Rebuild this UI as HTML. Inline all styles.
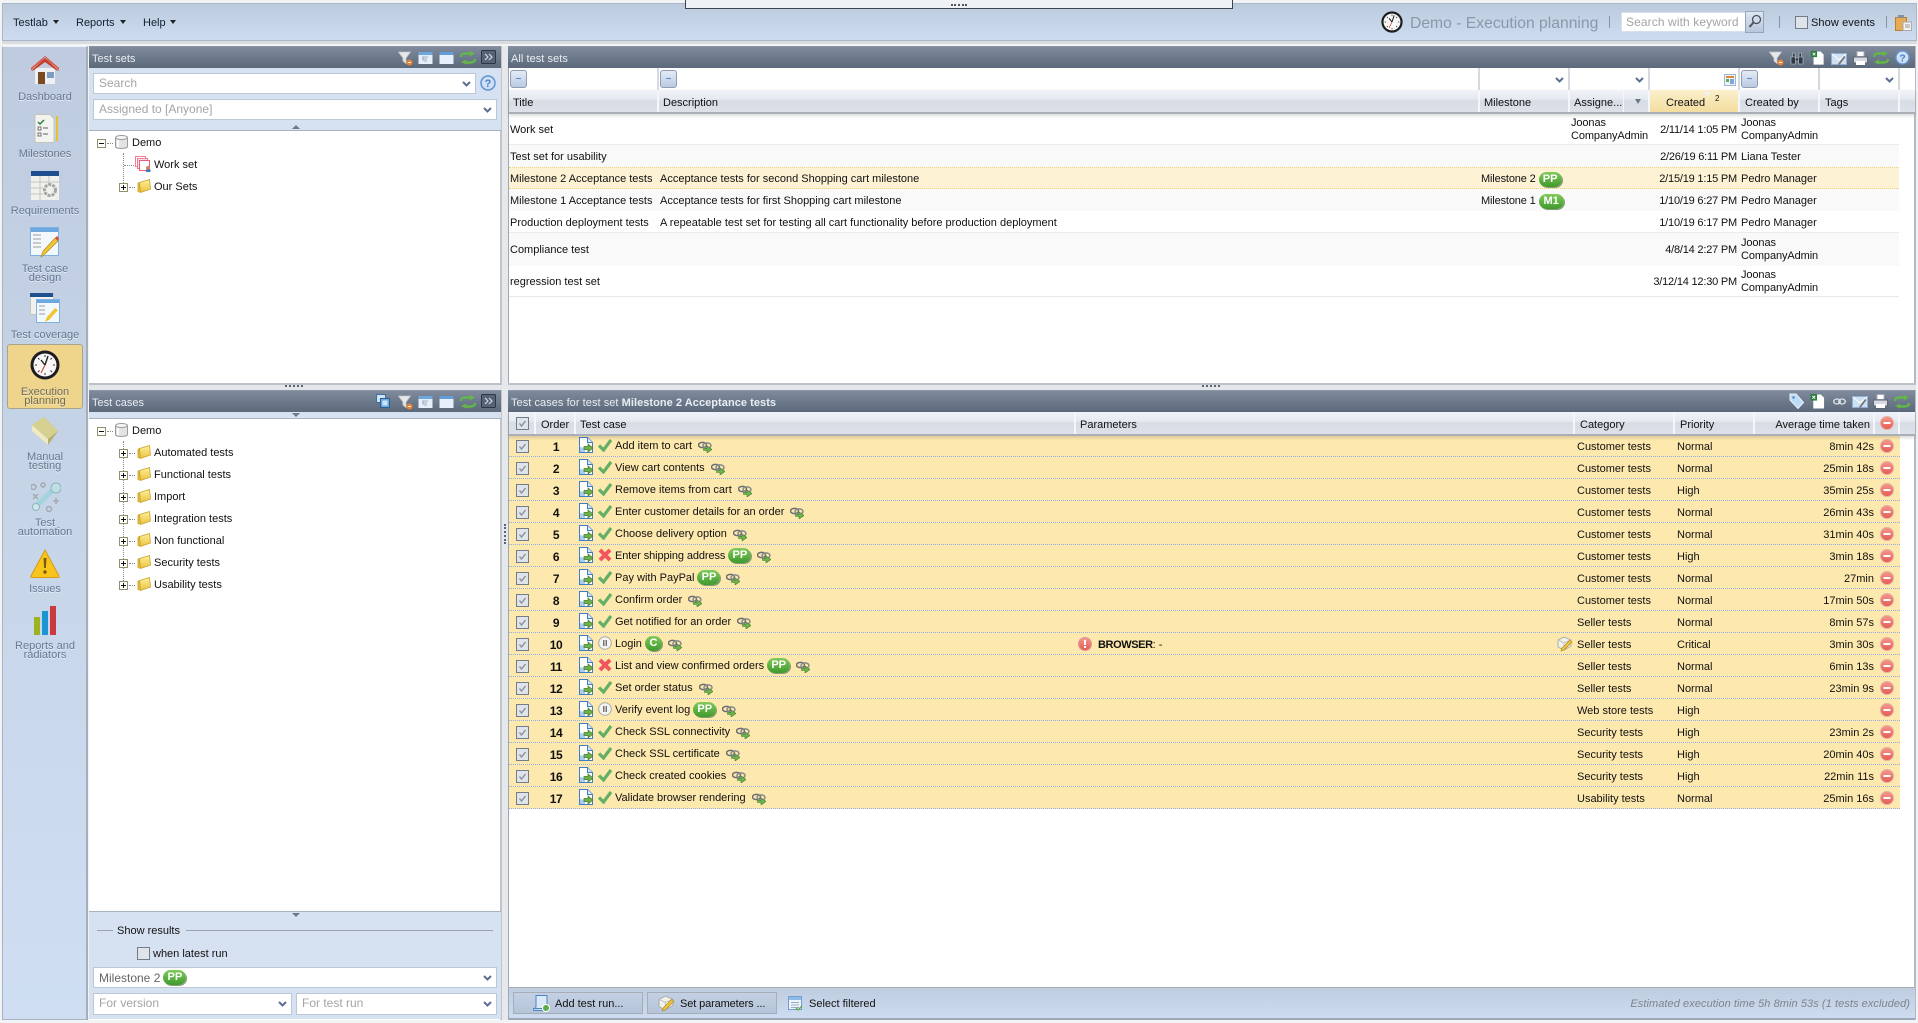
<!DOCTYPE html>
<html><head><meta charset="utf-8"><title>Demo - Execution planning</title>
<style>
*{box-sizing:border-box}
html,body{margin:0;padding:0;width:1918px;height:1023px;overflow:hidden;background:#f2f3f5;font:11px/12px "Liberation Sans",Arial,sans-serif;color:#111}
.a,.t,svg.i{position:absolute}
.t{white-space:nowrap;line-height:12px;margin-top:1px}
.hd{position:absolute;height:22px;background:linear-gradient(#7f8b9d,#5b697b);color:#eef1f5;border-top:1px solid #8a95a5}
.hd .t{color:#e9edf2}
.nav{position:absolute;left:0;width:90px;text-align:center;line-height:9px;color:#67778f;text-shadow:0 1px 0 #e4ecf7}
.in{position:absolute;background:#fff;border:1px solid #bcc7d8;color:#a4a4a4;line-height:18px;padding-left:5px;font-size:12px;white-space:nowrap}
.ch{position:absolute;width:9px;height:6px}
.colh{position:absolute;top:0;height:100%;border-right:2px solid #f4f6f9}
.gh{position:absolute;z-index:2;background:linear-gradient(#f0f3f8 0,#e6eaf1 40%,#d7dce5 50%,#dde1e8 100%);border-bottom:2px solid #a9aeb7;box-shadow:0 2px 3px rgba(60,60,60,.18)}
.fb{position:absolute;width:17px;height:18px;border:1px solid #8f9db3;border-radius:3px;background:linear-gradient(#e4ebf5,#b9cae2);color:#2a62c0;text-align:center;line-height:18px;font-size:10px}
.r{position:absolute;left:0;width:1391px;height:22px;background:#fde8ad;border-bottom:1px dotted #8fabe6}
.r .t{top:5px}
.cb{position:absolute;left:7px;top:5px;width:13px;height:13px}
.o{position:absolute;left:27px;width:40px;top:6px;text-align:center;font-weight:bold;font-size:12px;line-height:12px;letter-spacing:-.4px}
.tc{position:absolute;left:70px;top:1px;height:21px;display:flex;align-items:center;white-space:nowrap;padding-bottom:1px}
.tc svg{flex:none;position:relative;top:-1px}
.pill{display:inline-block;height:15px;width:23px;border-radius:8px;background:linear-gradient(#82c95c,#3f9a2c);color:#fff;font-weight:bold;font-size:11px;line-height:14px;text-align:center;margin-left:3px;box-shadow:1px 1px 0 #8b9a7a;position:relative;top:-1px}
.c1{left:1068px}.c2{left:1168px}.c3{right:26px}
.st{width:14px;height:14px;margin:0 3px 0 0}
.lk{width:14px;height:12px;margin-left:6px;margin-top:4px}
.m{position:absolute;left:1371px;top:4px;width:14px;height:14px}
.gr{position:absolute;left:0;width:1391px;height:1px;background:#ebecef}
.bt{position:absolute;top:992px;height:22px;width:130px;border:1px solid #a7adb6;background:linear-gradient(#c4d1e4,#b5c4d9)}
.d{letter-spacing:-.2px}
.j{line-height:13px!important;letter-spacing:-.1px}
</style></head><body>
<svg width="0" height="0" style="position:absolute">
<defs>
<linearGradient id="gf" x1="0" y1="0" x2="0" y2="1"><stop offset="0" stop-color="#fdf09a"/><stop offset="1" stop-color="#ecc23f"/></linearGradient>
<linearGradient id="gr" x1="0" y1="0" x2="0" y2="1"><stop offset="0" stop-color="#f59a8e"/><stop offset="1" stop-color="#e65a52"/></linearGradient>
<symbol id="doc" viewBox="0 0 14 16"><path d="M.5.5h8l5 5v10H.5z" fill="#fff" stroke="#3f7ec4"/><path d="M8.500.5v5h5" fill="#d8e8f8" stroke="#3f7ec4"/><path d="M1 10l5 1v4H1z" fill="#a9cdf0"/><path d="M5 9.500h4V7l5 4-5 4v-2.500H5z" fill="#6fb04a" stroke="#3e7d2c" stroke-width=".7"/></symbol>
<symbol id="ok" viewBox="0 0 14 14"><path d="M1 7.500l4.500 4.500L13 2" fill="none" stroke="#62b066" stroke-width="3.200"/></symbol>
<symbol id="x" viewBox="0 0 14 14"><path d="M2 2l10 10M12 2L2 12" fill="none" stroke="#f2555e" stroke-width="4"/></symbol>
<symbol id="pz" viewBox="0 0 14 14"><circle cx="7" cy="7" r="6.300" fill="#f4f4f2" stroke="#a9a9a9"/><path d="M5 4h1.500v6H5zM7.500 4H9v6H7.500z" fill="#777"/></symbol>
<symbol id="lk" viewBox="0 0 14 12"><ellipse cx="4.500" cy="4" rx="4" ry="2.600" fill="none" stroke="#6c6f72" stroke-width="1.500"/><ellipse cx="9" cy="4.500" rx="4" ry="2.600" fill="none" stroke="#85888b" stroke-width="1.500"/><path d="M5.500 7.500H9V5l5 3.500L9 12V9.500H5.500z" fill="#71b34c" stroke="#417f2e" stroke-width=".6"/></symbol>
<symbol id="m" viewBox="0 0 14 14"><circle cx="7" cy="7" r="6.500" fill="url(#gr)" stroke="#e6b0a4"/><rect x="3.500" y="6" width="7" height="2" fill="#fff"/></symbol>
<symbol id="cb" viewBox="0 0 13 13"><rect x=".5" y=".5" width="12" height="12" fill="#dfe3ea" stroke="#747c8c"/><path d="M3.500 6.500l2 2.500 4-5" fill="none" stroke="#8a8f98" stroke-width="1.400"/></symbol>
<symbol id="fo" viewBox="0 0 14 14"><path d="M.5 4l2-1 .500 10.500L.5 13z" fill="#d9b23a"/><path d="M2.500 3.500L12.500.5l1 9.500-10 3.500z" fill="url(#gf)" stroke="#c9a22e" stroke-width=".8"/></symbol>
<symbol id="db" viewBox="0 0 13 14"><path d="M.5 2.500v9c0 2.600 12 2.600 12 0v-9" fill="#e3e3e3" stroke="#9a9a9a"/><ellipse cx="6.500" cy="2.500" rx="6" ry="2" fill="#f6f6f6" stroke="#9a9a9a"/><path d="M3 5v7" stroke="#fff" stroke-width="2"/></symbol>
<symbol id="pl" viewBox="0 0 9 9"><rect x=".5" y=".5" width="8" height="8" fill="#fff" stroke="#8f8f6c"/><path d="M2 4.500h5M4.500 2v5" stroke="#111"/></symbol>
<symbol id="mi" viewBox="0 0 9 9"><rect x=".5" y=".5" width="8" height="8" fill="#fff" stroke="#8f8f6c"/><path d="M2 4.500h5" stroke="#111"/></symbol>
<symbol id="fl" viewBox="0 0 15 15"><path d="M.5 1h12L8 7v5.500L5 10V7z" fill="#e7e8ea" stroke="#c4c7cb" stroke-width=".8"/><circle cx="11.500" cy="11.500" r="3" fill="#f0822d"/><rect x="10" y="11" width="3" height="1" fill="#fff"/></symbol>
<symbol id="tr" viewBox="0 0 15 14"><rect x=".5" y="1" width="14" height="12" fill="#e4effa"/><rect x=".5" y="1" width="14" height="3" fill="#6ea7dd"/><path d="M4 6h6M5 8h4M6 10h3M5 6v4" stroke="#8a9aae" stroke-width=".8"/></symbol>
<symbol id="wn" viewBox="0 0 15 14"><rect x=".5" y="1" width="14" height="12" fill="#e6effa"/><rect x=".5" y="1" width="14" height="3" fill="#5f9cd8"/></symbol>
<symbol id="rf" viewBox="0 0 16 14"><path d="M1 6c0-3 2-3.500 5-3.500h5M15 8c0 3-2 3.500-5 3.500H5" fill="none" stroke="#64b648" stroke-width="2.400"/><path d="M10 0l5 2.500-5 3zM6 8.500v5l-5-2.500z" fill="#64b648"/></symbol>
<symbol id="ff" viewBox="0 0 15 14"><rect x=".5" y=".5" width="14" height="13" rx="1" fill="#56647a" stroke="#2c3644"/><path d="M4 4l3 3-3 3M8 4l3 3-3 3" fill="none" stroke="#dfe6ef"/></symbol>
<symbol id="cp" viewBox="0 0 15 15"><rect x=".5" y=".5" width="9" height="8" fill="#cfe3f6" stroke="#3f6f9f"/><rect x="4.500" y="4.500" width="9" height="9" fill="#69a9df" stroke="#2f5f8f"/><rect x="6.500" y="6.500" width="5" height="5" fill="#cde4f7"/></symbol>
<symbol id="bi" viewBox="0 0 14 13"><path d="M1 5h4.500v7H1zM8.500 5H13v7H8.500zM2.500 1h2.500v4H2.500zM9 1h2.500v4H9zM5.500 6h3v3h-3z" fill="#2f3a44" stroke="#c9ced6" stroke-width=".6"/></symbol>
<symbol id="xl" viewBox="0 0 15 16"><path d="M3 .5h8l3.500 3.500v11.500H3z" fill="#fff"/><rect y="0" width="7" height="7" fill="#2e7d3e"/><path d="M2 2l3 3M5 2L2 5" stroke="#fff"/></symbol>
<symbol id="ma" viewBox="0 0 16 14"><rect x=".5" y="1.500" width="15" height="11" fill="#cfe0f3" stroke="#8fb0d4"/><path d="M1 2l7 6 7-6" fill="none" stroke="#fff"/><path d="M7 12l6-8 1.500 1-6 8z" fill="#777"/></symbol>
<symbol id="pr" viewBox="0 0 15 15"><path d="M4 .5h7v5H4z" fill="#fff" stroke="#aab"/><path d="M.5 6h14v6h-2.500v2.500H3V12H.5z" fill="#d7dbe1" stroke="#5d6672"/><rect x="3" y="10" width="9" height="4" fill="#fff"/></symbol>
<symbol id="tg" viewBox="0 0 15 16"><path d="M1 1h6l7.500 8.500-5.500 6L1 7z" fill="#bcdcf7" stroke="#e9f3fb"/><circle cx="4.500" cy="4.500" r="1.200" fill="#4a7fb5"/></symbol>
<symbol id="hl" viewBox="0 0 16 16"><circle cx="8" cy="8" r="7" fill="#cfe0f5" stroke="#5f95d5" stroke-width="1.500"/><text x="8" y="12" font-family="Liberation Sans" font-weight="bold" font-size="11" fill="#4a7fc5" text-anchor="middle">?</text></symbol>
<symbol id="pe" viewBox="0 0 16 16"><path d="M1 4l6-3 7 3v6l-7 4-6-3z" fill="#f1f1ee" stroke="#b0b0a8"/><path d="M1 4l6 3 7-3M7 7v7" fill="none" stroke="#c5c5bf"/><path d="M4 15l1-3 8-8 2 2-8 8z" fill="#f0c43c" stroke="#a9851e" stroke-width=".6"/></symbol>
<symbol id="ck" viewBox="0 0 30 30"><circle cx="15" cy="15" r="14.500" fill="#1d1d1f"/><circle cx="15" cy="15" r="11.500" fill="#f7f7f7"/><path d="M15 5v2M15 23v2M5 15h2M23 15h2M8 8l1.500 1.500M22 8l-1.500 1.500M8 22l1.500-1.500M22 22l-1.500-1.500" stroke="#333"/><path d="M15 15L11 10M15 15l3-9" stroke="#222" stroke-width="1.400" fill="none"/><path d="M15 15l-4 8" stroke="#c33" stroke-width="1"/></symbol>
<symbol id="ch" viewBox="0 0 9 6"><path d="M1 1l3.500 3.500L8 1" fill="none" stroke="#5d6d90" stroke-width="2"/></symbol>
</defs></svg>

<!-- top bar -->
<div class="a" style="left:2px;top:3px;width:1915px;height:38px;background:linear-gradient(#bccadd,#cddcf0);border:1px solid #abb6c6"></div>
<div class="a" style="left:2px;top:41px;width:1915px;height:3px;background:#d8dbe0"></div>
<!-- top drawer -->
<div class="a" style="left:685px;top:0;width:548px;height:9px;background:#eef1f5;border:1px solid #3d4450;border-top:0"></div>
<div class="a" style="left:951px;top:4px;width:16px;height:2px;border-top:2px dotted #555"></div>
<div class="t" style="left:13px;top:16px;color:#102030">Testlab</div><div class="a" style="left:53px;top:20px;border:3.500px solid transparent;border-top:4px solid #222;border-bottom:0"></div>
<div class="t" style="left:76px;top:16px;color:#102030">Reports</div><div class="a" style="left:120px;top:20px;border:3.500px solid transparent;border-top:4px solid #222;border-bottom:0"></div>
<div class="t" style="left:143px;top:16px;color:#102030">Help</div><div class="a" style="left:170px;top:20px;border:3.500px solid transparent;border-top:4px solid #222;border-bottom:0"></div>
<svg class="i" style="left:1381px;top:11px" width="22" height="22"><use href="#ck"/></svg>
<div class="t" style="left:1410px;top:13px;font-size:15.700px;line-height:19px;color:#8b98aa">Demo - Execution planning</div>
<div class="a" style="left:1609px;top:16px;width:1px;height:12px;background:#8794a5"></div>
<div class="in" style="left:1621px;top:12px;width:125px;height:20px;border-color:#d8e0ec;padding-left:4px;letter-spacing:.1px">Search with keyword</div>
<div class="a" style="left:1745px;top:11px;width:19px;height:22px;background:linear-gradient(#dfe6f1,#b8c7dc);border:1px solid #97a5b8"></div>
<svg class="i" style="left:1748px;top:14px" width="14" height="15"><circle cx="8.500" cy="5.500" r="4" fill="none" stroke="#49535f" stroke-width="1.300"/><path d="M5.500 8.500L1.500 13" stroke="#49535f" stroke-width="2"/></svg>
<div class="a" style="left:1779px;top:16px;width:1px;height:12px;background:#8794a5"></div>
<div class="a" style="left:1795px;top:16px;width:13px;height:13px;background:#dfe3ea;border:1px solid #747c8c"></div>
<div class="t" style="left:1811px;top:16px;letter-spacing:.1px">Show events</div>
<div class="a" style="left:1886px;top:16px;width:1px;height:12px;background:#8794a5"></div>
<svg class="i" style="left:1895px;top:15px" width="17" height="16"><path d="M.5 2.500h11v13H.5z" fill="#e7ab55" stroke="#b5822f"/><rect x="3" y="0" width="6" height="3" fill="#8a8f95"/><path d="M8 7h8.500v8.500H8z" fill="#f2f2f2" stroke="#aaa"/><path d="M10 10h5M10 12h5" stroke="#999"/></svg>

<!-- left nav -->
<div class="a" style="left:2px;top:46px;width:86px;height:974px;background:linear-gradient(#bfcce0,#cfdef2);border:1px solid #a9b3c2;border-top:1px solid #eef2f8;border-right:2px solid #a6aebb"></div>
<svg class="i" style="left:31px;top:56px" width="28" height="30"><path d="M4 12h20v16H4z" fill="#eef0f2"/><path d="M7 16h7v12H7z" fill="#7a4a20"/><path d="M16 16h7v6h-7z" fill="#7f9cc0"/><path d="M0 14L14 1l14 13v-2L14 0 0 12z" fill="#d8402c"/><path d="M1 13L14 2l13 11v-2L14 2 1 11z" fill="#e5533a"/><path d="M0 15l14-13 14 13-3-1L14 6 3 14z" fill="#c63a28"/></svg>
<div class="nav" style="top:93px">Dashboard</div>
<svg class="i" style="left:33px;top:114px" width="26" height="30"><path d="M2 .5h15l4 4v24H2z" fill="#f3f3f0" stroke="#c4c4bf"/><path d="M5 8l2 2 4-4" stroke="#2e7d3e" fill="none" stroke-width="1.500"/><path d="M5 13h3v3H5zM5 19h3v3H5z" fill="none" stroke="#777"/><path d="M10 14h5M10 20h5" stroke="#aaa" stroke-width="2"/><rect x="23" y="2" width="2" height="25" fill="#e8c22a"/></svg>
<div class="nav" style="top:150px">Milestones</div>
<svg class="i" style="left:31px;top:171px" width="28" height="29"><rect width="28" height="29" fill="#f0f0ec"/><rect width="28" height="5" fill="#1f4f8f"/><path d="M9 5v24M18 5v10M0 11h28M0 17h12M0 23h12" stroke="#c6c6c0"/><circle cx="19" cy="19" r="5.500" fill="none" stroke="#a5a5a5" stroke-width="3" stroke-dasharray="3 1"/></svg>
<div class="nav" style="top:207px">Requirements</div>
<svg class="i" style="left:30px;top:227px" width="30" height="31"><rect x=".5" y=".5" width="28" height="28" fill="#f3f8fd" stroke="#7fb1e2"/><rect x="1" y="1" width="27" height="4" fill="#6ea7dd"/><path d="M3 8h8M3 12h8M3 16h8M3 20h8" stroke="#bbb" stroke-width="1.500"/><path d="M11 30l2-6L25 11l3 3-13 13z" fill="#efc534" stroke="#a9851e" stroke-width=".6"/><path d="M25 11l2-2 2 2-1 3z" fill="#d8504c"/></svg>
<div class="nav" style="top:265px">Test case<br>design</div>
<svg class="i" style="left:30px;top:293px" width="30" height="31"><rect x=".5" y=".5" width="23" height="21" fill="#f0f0ec" stroke="#c5c5c0"/><rect width="23" height="4" fill="#1f4f8f"/><rect x="6.500" y="6.500" width="23" height="23" fill="#f3f8fd" stroke="#7fb1e2"/><rect x="7" y="7" width="22" height="3" fill="#6ea7dd"/><path d="M9 13h6M9 17h6M9 21h6" stroke="#bbb" stroke-width="1.500"/><path d="M15 29l2-5 8-9 3 2-9 10z" fill="#efc534"/></svg>
<div class="nav" style="top:331px">Test coverage</div>
<div class="a" style="left:7px;top:344px;width:76px;height:65px;background:#efd48b;border:1px solid #a9a48a;border-radius:3px"></div>
<svg class="i" style="left:30px;top:350px" width="30" height="30"><use href="#ck"/></svg>
<div class="nav" style="top:388px;color:#6b6c60;text-shadow:0 1px 0 #f6e6b4">Execution<br>planning</div>
<svg class="i" style="left:31px;top:417px" width="28" height="29"><path d="M1 8L13 0l14 14-10 14L1 14z" fill="#b5af6e"/><path d="M1 8L17 22l10-8L13 0z" fill="#d6d091"/><path d="M1 8v6l16 14v-6z" fill="#eeeac6"/></svg>
<div class="nav" style="top:453px">Manual<br>testing</div>
<svg class="i" style="left:31px;top:482px" width="30" height="31"><circle cx="2.500" cy="5" r="2.500" fill="none" stroke="#a2aab0" stroke-width="1.500"/><circle cx="12" cy="3" r="2" fill="none" stroke="#a2aab0" stroke-width="1.500"/><path d="M2 12l5 5M7 12l-5 5M22 19h6M25 16v6" stroke="#a2aab0" stroke-width="1.500"/><circle cx="18" cy="27" r="2.500" fill="none" stroke="#a2aab0" stroke-width="1.500"/><path d="M5 24L22 8" stroke="#a3d3dc" stroke-width="5"/><circle cx="25" cy="6" r="5" fill="#bfdfe4" stroke="#8fb4bc"/><circle cx="5" cy="25" r="3.500" fill="#cfe8ec" stroke="#8fb4bc"/></svg>
<div class="nav" style="top:519px">Test<br>automation</div>
<svg class="i" style="left:30px;top:549px" width="30" height="29"><path d="M15 1L29 27a1 1 0 0 1-1 1.500H2A1 1 0 0 1 1 27z" fill="#f7c51c" stroke="#d99a15"/><path d="M13.500 9h3l-.6 10h-1.800z" fill="#7a5a10"/><circle cx="15" cy="23" r="1.700" fill="#7a5a10"/></svg>
<div class="nav" style="top:585px">Issues</div>
<svg class="i" style="left:33px;top:606px" width="24" height="30"><rect x="1" y="11" width="6" height="18" fill="#9bb31f"/><rect x="9" y="5" width="6" height="24" fill="#1d95d4"/><rect x="17" y="0" width="6" height="29" fill="#c93a3e"/></svg>
<div class="nav" style="top:642px">Reports and<br>radiators</div>

<!-- left panel frame -->
<div class="a" style="left:89px;top:46px;width:413px;height:974px;background:#fff;border-right:2px solid #c0c5cc"></div>
<div class="hd" style="left:89px;top:46px;width:412px"><div class="t" style="left:3px;top:5px;font-size:11px">Test sets</div></div>
<svg class="i" style="left:398px;top:51px" width="15" height="15"><use href="#fl"/></svg>
<svg class="i" style="left:418px;top:51px" width="15" height="14"><use href="#tr"/></svg>
<svg class="i" style="left:439px;top:51px" width="15" height="14"><use href="#wn"/></svg>
<svg class="i" style="left:460px;top:51px" width="16" height="14"><use href="#rf"/></svg>
<svg class="i" style="left:481px;top:50px" width="15" height="14"><use href="#ff"/></svg>
<div class="a" style="left:89px;top:68px;width:412px;height:63px;background:#d6e1f1;border-bottom:1px solid #a9b3c0"></div>
<div class="in" style="left:93px;top:73px;width:383px;height:21px">Search</div>
<svg class="ch" style="left:462px;top:81px"><use href="#ch"/></svg>
<svg class="i" style="left:480px;top:75px" width="16" height="16"><use href="#hl"/></svg>
<div class="in" style="left:93px;top:99px;width:404px;height:21px">Assigned to [Anyone]</div>
<svg class="ch" style="left:483px;top:107px"><use href="#ch"/></svg>
<div class="a" style="left:292px;top:125px;border:4px solid transparent;border-bottom:4px solid #6d7888;border-top:0"></div>
<!-- tree 1 -->
<svg class="i" style="left:97px;top:139px" width="9" height="9"><use href="#mi"/></svg>
<div class="a" style="left:107px;top:143px;width:6px;border-top:1px dotted #888"></div>
<svg class="i" style="left:115px;top:135px" width="13" height="14"><use href="#db"/></svg>
<div class="t" style="left:132px;top:136px">Demo</div>
<div class="a" style="left:123px;top:153px;height:30px;border-left:1px dotted #888"></div>
<div class="a" style="left:124px;top:165px;width:10px;border-top:1px dotted #888"></div>
<svg class="i" style="left:135px;top:156px" width="17" height="16"><rect x=".5" y=".5" width="10" height="10" fill="#fff" stroke="#ee7f8f"/><rect x="2.500" y="2.500" width="10" height="10" fill="#fde" stroke="#ee7f8f"/><rect x="4.500" y="4.500" width="10" height="10" fill="#fff" stroke="#ee5f75"/><circle cx="13" cy="12" r="2" fill="#c86"/><rect x="11" y="13.500" width="4.500" height="2.500" fill="#3b78c0"/></svg>
<div class="t" style="left:154px;top:158px">Work set</div>
<svg class="i" style="left:119px;top:183px" width="9" height="9"><use href="#pl"/></svg>
<div class="a" style="left:129px;top:187px;width:6px;border-top:1px dotted #888"></div>
<svg class="i" style="left:137px;top:179px" width="14" height="14"><use href="#fo"/></svg>
<div class="t" style="left:154px;top:180px">Our Sets</div>

<!-- splitter left -->
<div class="a" style="left:89px;top:383px;width:413px;height:7px;background:#e4e6ea;border-top:2px solid #bcc1c8"></div>
<div class="a" style="left:285px;top:385px;width:18px;height:2px;border-top:2px dotted #5a6475"></div>
<div class="hd" style="left:89px;top:390px;width:412px"><div class="t" style="left:3px;top:5px">Test cases</div></div>
<svg class="i" style="left:376px;top:394px" width="15" height="15"><use href="#cp"/></svg>
<svg class="i" style="left:398px;top:395px" width="15" height="15"><use href="#fl"/></svg>
<svg class="i" style="left:418px;top:395px" width="15" height="14"><use href="#tr"/></svg>
<svg class="i" style="left:439px;top:395px" width="15" height="14"><use href="#wn"/></svg>
<svg class="i" style="left:460px;top:395px" width="16" height="14"><use href="#rf"/></svg>
<svg class="i" style="left:481px;top:394px" width="15" height="14"><use href="#ff"/></svg>
<div class="a" style="left:89px;top:412px;width:412px;height:7px;background:#d6e1f1;border-bottom:1px solid #a9b3c0"></div>
<div class="a" style="left:292px;top:413px;border:4px solid transparent;border-top:4px solid #6d7888;border-bottom:0"></div>
<!-- tree 2 -->
<svg class="i" style="left:97px;top:427px" width="9" height="9"><use href="#mi"/></svg>
<div class="a" style="left:107px;top:431px;width:6px;border-top:1px dotted #888"></div>
<svg class="i" style="left:115px;top:423px" width="13" height="14"><use href="#db"/></svg>
<div class="t" style="left:132px;top:424px">Demo</div>
<div class="a" style="left:123px;top:441px;height:140px;border-left:1px dotted #888"></div>
<svg class="i" style="left:119px;top:449px" width="9" height="9"><use href="#pl"/></svg><div class="a" style="left:129px;top:453px;width:6px;border-top:1px dotted #888"></div><svg class="i" style="left:137px;top:445px" width="14" height="14"><use href="#fo"/></svg><div class="t" style="left:154px;top:446px">Automated tests</div>
<svg class="i" style="left:119px;top:471px" width="9" height="9"><use href="#pl"/></svg><div class="a" style="left:129px;top:475px;width:6px;border-top:1px dotted #888"></div><svg class="i" style="left:137px;top:467px" width="14" height="14"><use href="#fo"/></svg><div class="t" style="left:154px;top:468px">Functional tests</div>
<svg class="i" style="left:119px;top:493px" width="9" height="9"><use href="#pl"/></svg><div class="a" style="left:129px;top:497px;width:6px;border-top:1px dotted #888"></div><svg class="i" style="left:137px;top:489px" width="14" height="14"><use href="#fo"/></svg><div class="t" style="left:154px;top:490px">Import</div>
<svg class="i" style="left:119px;top:515px" width="9" height="9"><use href="#pl"/></svg><div class="a" style="left:129px;top:519px;width:6px;border-top:1px dotted #888"></div><svg class="i" style="left:137px;top:511px" width="14" height="14"><use href="#fo"/></svg><div class="t" style="left:154px;top:512px">Integration tests</div>
<svg class="i" style="left:119px;top:537px" width="9" height="9"><use href="#pl"/></svg><div class="a" style="left:129px;top:541px;width:6px;border-top:1px dotted #888"></div><svg class="i" style="left:137px;top:533px" width="14" height="14"><use href="#fo"/></svg><div class="t" style="left:154px;top:534px">Non functional</div>
<svg class="i" style="left:119px;top:559px" width="9" height="9"><use href="#pl"/></svg><div class="a" style="left:129px;top:563px;width:6px;border-top:1px dotted #888"></div><svg class="i" style="left:137px;top:555px" width="14" height="14"><use href="#fo"/></svg><div class="t" style="left:154px;top:556px">Security tests</div>
<svg class="i" style="left:119px;top:581px" width="9" height="9"><use href="#pl"/></svg><div class="a" style="left:129px;top:585px;width:6px;border-top:1px dotted #888"></div><svg class="i" style="left:137px;top:577px" width="14" height="14"><use href="#fo"/></svg><div class="t" style="left:154px;top:578px">Usability tests</div>
<!-- left bottom -->
<div class="a" style="left:89px;top:911px;width:412px;height:108px;background:#d6e1f1;border-top:1px solid #a9b3c0"></div>
<div class="a" style="left:292px;top:913px;border:4px solid transparent;border-top:4px solid #6d7888;border-bottom:0"></div>
<div class="a" style="left:97px;top:930px;width:16px;height:1px;background:#9aa3af"></div>
<div class="t" style="left:117px;top:924px">Show results</div>
<div class="a" style="left:186px;top:930px;width:307px;height:1px;background:#9aa3af"></div>
<div class="a" style="left:137px;top:947px;width:13px;height:13px;background:#dfe3ea;border:1px solid #747c8c"></div>
<div class="t" style="left:153px;top:947px">when latest run</div>
<div class="in" style="left:93px;top:967px;width:404px;height:21px;color:#666;display:flex;align-items:center">Milestone 2<span class="pill" style="margin-left:3px;top:0">PP</span></div>
<svg class="ch" style="left:483px;top:975px"><use href="#ch"/></svg>
<div class="in" style="left:93px;top:993px;width:199px;height:22px">For version</div>
<svg class="ch" style="left:278px;top:1001px"><use href="#ch"/></svg>
<div class="in" style="left:296px;top:993px;width:201px;height:22px">For test run</div>
<svg class="ch" style="left:483px;top:1001px"><use href="#ch"/></svg>

<!-- vertical splitter -->
<div class="a" style="left:502px;top:46px;width:6px;height:974px;background:#e6e8ec"></div>
<div class="a" style="left:504px;top:524px;width:2px;height:20px;border-left:2px dotted #5a6475"></div>

<!-- top right panel -->
<div class="a" style="left:508px;top:46px;width:1408px;height:337px;background:#fff;border-right:2px solid #b4bac3;border-left:1px solid #9ea8b6"></div>
<div class="hd" style="left:508px;top:46px;width:1407px"><div class="t" style="left:3px;top:5px;letter-spacing:.05px">All test sets</div></div>
<svg class="i" style="left:1769px;top:51px" width="15" height="15"><use href="#fl"/></svg>
<svg class="i" style="left:1790px;top:52px" width="14" height="13"><use href="#bi"/></svg>
<svg class="i" style="left:1810px;top:51px" width="15" height="14"><use href="#xl"/></svg>
<svg class="i" style="left:1831px;top:52px" width="16" height="14"><use href="#ma"/></svg>
<svg class="i" style="left:1853px;top:51px" width="15" height="15"><use href="#pr"/></svg>
<svg class="i" style="left:1873px;top:51px" width="16" height="14"><use href="#rf"/></svg>
<svg class="i" style="left:1895px;top:50px" width="15" height="15"><use href="#hl"/></svg>
<!-- filters -->
<div class="a" style="left:509px;top:68px;width:1406px;height:22px;background:#fff"></div>
<div class="a" style="left:657px;top:68px;width:2px;height:22px;background:#d6d9df"></div>
<div class="a" style="left:1478px;top:68px;width:2px;height:22px;background:#d6d9df"></div>
<div class="a" style="left:1568px;top:68px;width:2px;height:22px;background:#d6d9df"></div>
<div class="a" style="left:1648px;top:68px;width:2px;height:22px;background:#d6d9df"></div>
<div class="a" style="left:1738px;top:68px;width:2px;height:22px;background:#d6d9df"></div>
<div class="a" style="left:1818px;top:68px;width:2px;height:22px;background:#d6d9df"></div>
<div class="a" style="left:1898px;top:68px;width:2px;height:22px;background:#d6d9df"></div>
<div class="fb" style="left:510px;top:70px">~</div><div class="fb" style="left:660px;top:70px">~</div><div class="fb" style="left:1741px;top:70px">~</div>
<svg class="ch" style="left:1555px;top:77px"><use href="#ch"/></svg>
<svg class="ch" style="left:1635px;top:77px"><use href="#ch"/></svg>
<svg class="ch" style="left:1885px;top:77px"><use href="#ch"/></svg>
<svg class="i" style="left:1724px;top:74px" width="12" height="12"><rect x=".5" y=".5" width="11" height="11" fill="#eef3f9" stroke="#9fb6d4"/><rect x="2" y="2" width="8" height="2" fill="#e08a3c"/><rect x="2" y="5" width="3" height="3" fill="#6fa855"/><rect x="6" y="5" width="4" height="5" fill="#7fa8d8"/></svg>
<!-- header -->
<div class="gh" style="left:509px;top:90px;width:1406px;height:24px">
<div class="colh" style="left:0;width:150px"></div><div class="colh" style="left:150px;width:821px"></div><div class="colh" style="left:971px;width:90px"></div><div class="colh" style="left:1061px;width:80px"></div><div class="colh" style="left:1141px;width:90px;background:linear-gradient(#fbf0cc,#f4dd9f)"></div><div class="colh" style="left:1231px;width:80px"></div><div class="colh" style="left:1311px;width:80px"></div>
<div class="t" style="left:4px;top:6px">Title</div><div class="t" style="left:154px;top:6px">Description</div><div class="t" style="left:975px;top:6px">Milestone</div><div class="t" style="left:1065px;top:6px">Assigne...</div>
<div class="a" style="left:1114px;top:0;width:1px;height:22px;background:#f4f6f9"></div><div class="a" style="left:1126px;top:9px;border:3px solid transparent;border-top:5px solid #6d7888;border-bottom:0"></div>
<div class="t" style="left:1157px;top:6px">Created</div><div class="a" style="left:1194px;top:2px;border:4px solid transparent;border-top:4px solid #eef2f8;border-bottom:0"></div><div class="t" style="left:1206px;top:2px;font-size:8px">2</div>
<div class="t" style="left:1236px;top:6px">Created by</div><div class="t" style="left:1316px;top:6px">Tags</div>
</div>
<!-- rows -->
<div class="a" style="left:509px;top:144px;width:1390px;height:23px;background:#f9f9f9;border-top:1px solid #eaebee"></div>
<div class="a" style="left:509px;top:167px;width:1390px;height:22px;background:#fef2d5;border-top:1px dotted #ecd47f;border-bottom:1px dotted #ecd47f"></div>
<div class="a" style="left:509px;top:189px;width:1390px;height:22px;background:#f9f9f9"></div>
<div class="a" style="left:509px;top:232px;width:1390px;height:34px;background:#f9f9f9;border-top:1px solid #eaebee"></div>
<div class="a" style="left:509px;top:296px;width:1390px;height:1px;background:#e8e9ec"></div>
<div class="t" style="left:510px;top:123px">Work set</div>
<div class="t j" style="left:1571px;top:116px">Joonas<br>CompanyAdmin</div>
<div class="t d" style="right:181px;top:123px">2/11/14 1:05 PM</div>
<div class="t j" style="left:1741px;top:116px">Joonas<br>CompanyAdmin</div>
<div class="t" style="left:510px;top:150px">Test set for usability</div>
<div class="t d" style="right:181px;top:150px">2/26/19 6:11 PM</div>
<div class="t" style="left:1741px;top:150px">Liana Tester</div>
<div class="t" style="left:510px;top:172px">Milestone 2 Acceptance tests</div>
<div class="t" style="left:660px;top:172px">Acceptance tests for second Shopping cart milestone</div>
<div class="t" style="left:1481px;top:172px;display:flex;align-items:center;height:12px;letter-spacing:-.15px">Milestone 2<span class="pill" style="letter-spacing:0;top:0">PP</span></div>
<div class="t d" style="right:181px;top:172px">2/15/19 1:15 PM</div>
<div class="t" style="left:1741px;top:172px">Pedro Manager</div>
<div class="t" style="left:510px;top:194px">Milestone 1 Acceptance tests</div>
<div class="t" style="left:660px;top:194px">Acceptance tests for first Shopping cart milestone</div>
<div class="t" style="left:1481px;top:194px;display:flex;align-items:center;height:12px;letter-spacing:-.15px">Milestone 1<span class="pill" style="width:25px;letter-spacing:0;top:0">M1</span></div>
<div class="t d" style="right:181px;top:194px">1/10/19 6:27 PM</div>
<div class="t" style="left:1741px;top:194px">Pedro Manager</div>
<div class="t" style="left:510px;top:216px">Production deployment tests</div>
<div class="t" style="left:660px;top:216px">A repeatable test set for testing all cart functionality before production deployment</div>
<div class="t d" style="right:181px;top:216px">1/10/19 6:17 PM</div>
<div class="t" style="left:1741px;top:216px">Pedro Manager</div>
<div class="t" style="left:510px;top:243px">Compliance test</div>
<div class="t d" style="right:181px;top:243px">4/8/14 2:27 PM</div>
<div class="t j" style="left:1741px;top:236px">Joonas<br>CompanyAdmin</div>
<div class="t" style="left:510px;top:275px">regression test set</div>
<div class="t d" style="right:181px;top:275px">3/12/14 12:30 PM</div>
<div class="t j" style="left:1741px;top:268px">Joonas<br>CompanyAdmin</div>

<!-- splitter right -->
<div class="a" style="left:508px;top:383px;width:1408px;height:7px;background:#e4e6ea;border-top:2px solid #bcc1c8"></div>
<div class="a" style="left:1202px;top:385px;width:18px;height:2px;border-top:2px dotted #5a6475"></div>

<!-- lower right panel -->
<div class="a" style="left:508px;top:390px;width:1408px;height:630px;background:#fff;border-right:2px solid #b4bac3;border-left:1px solid #9ea8b6"></div>
<div class="hd" style="left:508px;top:390px;width:1407px"><div class="t" style="left:3px;top:5px;letter-spacing:.05px">Test cases for test set <b>Milestone 2 Acceptance tests</b></div></div>
<svg class="i" style="left:1789px;top:393px" width="15" height="16"><use href="#tg"/></svg>
<svg class="i" style="left:1810px;top:394px" width="15" height="15"><use href="#xl"/></svg>
<svg class="i" style="left:1833px;top:398px" width="13" height="7"><ellipse cx="4" cy="3.500" rx="3.300" ry="2.500" fill="none" stroke="#dfe4ea" stroke-width="1.300"/><ellipse cx="9" cy="3.500" rx="3.300" ry="2.500" fill="none" stroke="#dfe4ea" stroke-width="1.300"/></svg>
<svg class="i" style="left:1852px;top:395px" width="16" height="14"><use href="#ma"/></svg>
<svg class="i" style="left:1873px;top:394px" width="15" height="15"><use href="#pr"/></svg>
<svg class="i" style="left:1894px;top:395px" width="16" height="14"><use href="#rf"/></svg>
<div class="gh" style="left:509px;top:412px;width:1406px;height:24px">
<div class="colh" style="left:0;width:27px"></div><div class="colh" style="left:27px;width:40px"></div><div class="colh" style="left:67px;width:500px"></div><div class="colh" style="left:567px;width:499px"></div><div class="colh" style="left:1066px;width:100px"></div><div class="colh" style="left:1166px;width:80px"></div><div class="colh" style="left:1246px;width:120px"></div><div class="colh" style="left:1366px;width:25px"></div>
<svg class="cb" style="left:7px;top:5px"><use href="#cb"/></svg>
<div class="t" style="left:32px;top:6px">Order</div><div class="t" style="left:71px;top:6px">Test case</div><div class="t" style="left:571px;top:6px">Parameters</div><div class="t" style="left:1071px;top:6px">Category</div><div class="t" style="left:1171px;top:6px">Priority</div><div class="t" style="right:45px;top:6px">Average time taken</div>
<svg class="m" style="left:1371px;top:4px"><use href="#m"/></svg>
</div>
<div class="a" style="left:509px;top:435px;width:1391px;height:374px">
<div class="r" style="top:0"><svg class="cb"><use href="#cb"/></svg><div class="o">1</div><div class="tc"><svg width="14" height="16" style="margin-right:5px"><use href="#doc"/></svg><svg class="st"><use href="#ok"/></svg>Add item to cart<svg class="lk"><use href="#lk"/></svg></div><div class="t c1">Customer tests</div><div class="t c2">Normal</div><div class="t c3">8min 42s</div><svg class="m"><use href="#m"/></svg></div>
<div class="r" style="top:22px"><svg class="cb"><use href="#cb"/></svg><div class="o">2</div><div class="tc"><svg width="14" height="16" style="margin-right:5px"><use href="#doc"/></svg><svg class="st"><use href="#ok"/></svg>View cart contents<svg class="lk"><use href="#lk"/></svg></div><div class="t c1">Customer tests</div><div class="t c2">Normal</div><div class="t c3">25min 18s</div><svg class="m"><use href="#m"/></svg></div>
<div class="r" style="top:44px"><svg class="cb"><use href="#cb"/></svg><div class="o">3</div><div class="tc"><svg width="14" height="16" style="margin-right:5px"><use href="#doc"/></svg><svg class="st"><use href="#ok"/></svg>Remove items from cart<svg class="lk"><use href="#lk"/></svg></div><div class="t c1">Customer tests</div><div class="t c2">High</div><div class="t c3">35min 25s</div><svg class="m"><use href="#m"/></svg></div>
<div class="r" style="top:66px"><svg class="cb"><use href="#cb"/></svg><div class="o">4</div><div class="tc"><svg width="14" height="16" style="margin-right:5px"><use href="#doc"/></svg><svg class="st"><use href="#ok"/></svg>Enter customer details for an order<svg class="lk"><use href="#lk"/></svg></div><div class="t c1">Customer tests</div><div class="t c2">Normal</div><div class="t c3">26min 43s</div><svg class="m"><use href="#m"/></svg></div>
<div class="r" style="top:88px"><svg class="cb"><use href="#cb"/></svg><div class="o">5</div><div class="tc"><svg width="14" height="16" style="margin-right:5px"><use href="#doc"/></svg><svg class="st"><use href="#ok"/></svg>Choose delivery option<svg class="lk"><use href="#lk"/></svg></div><div class="t c1">Customer tests</div><div class="t c2">Normal</div><div class="t c3">31min 40s</div><svg class="m"><use href="#m"/></svg></div>
<div class="r" style="top:110px"><svg class="cb"><use href="#cb"/></svg><div class="o">6</div><div class="tc"><svg width="14" height="16" style="margin-right:5px"><use href="#doc"/></svg><svg class="st"><use href="#x"/></svg><span style="letter-spacing:-.1px">Enter shipping address</span><span class="pill">PP</span><svg class="lk"><use href="#lk"/></svg></div><div class="t c1">Customer tests</div><div class="t c2">High</div><div class="t c3">3min 18s</div><svg class="m"><use href="#m"/></svg></div>
<div class="r" style="top:132px"><svg class="cb"><use href="#cb"/></svg><div class="o">7</div><div class="tc"><svg width="14" height="16" style="margin-right:5px"><use href="#doc"/></svg><svg class="st"><use href="#ok"/></svg>Pay with PayPal<span class="pill">PP</span><svg class="lk"><use href="#lk"/></svg></div><div class="t c1">Customer tests</div><div class="t c2">Normal</div><div class="t c3">27min</div><svg class="m"><use href="#m"/></svg></div>
<div class="r" style="top:154px"><svg class="cb"><use href="#cb"/></svg><div class="o">8</div><div class="tc"><svg width="14" height="16" style="margin-right:5px"><use href="#doc"/></svg><svg class="st"><use href="#ok"/></svg>Confirm order<svg class="lk"><use href="#lk"/></svg></div><div class="t c1">Customer tests</div><div class="t c2">Normal</div><div class="t c3">17min 50s</div><svg class="m"><use href="#m"/></svg></div>
<div class="r" style="top:176px"><svg class="cb"><use href="#cb"/></svg><div class="o">9</div><div class="tc"><svg width="14" height="16" style="margin-right:5px"><use href="#doc"/></svg><svg class="st"><use href="#ok"/></svg>Get notified for an order<svg class="lk"><use href="#lk"/></svg></div><div class="t c1">Seller tests</div><div class="t c2">Normal</div><div class="t c3">8min 57s</div><svg class="m"><use href="#m"/></svg></div>
<div class="r" style="top:198px"><svg class="cb"><use href="#cb"/></svg><div class="o">10</div><div class="tc"><svg width="14" height="16" style="margin-right:5px"><use href="#doc"/></svg><svg class="st"><use href="#pz"/></svg>Login<span class="pill" style="width:17px">C</span><svg class="lk"><use href="#lk"/></svg></div>
<svg class="i" style="left:569px;top:4px" width="14" height="14" viewBox="0 0 14 14"><circle cx="7" cy="7" r="6.500" fill="url(#gr)" stroke="#d99"/><rect x="6" y="3" width="2" height="5" fill="#fff"/><rect x="6" y="9" width="2" height="2" fill="#fff"/></svg>
<div class="t" style="left:589px"><b style="letter-spacing:-.4px">BROWSER</b>: -</div>
<svg class="i" style="left:1048px;top:3px" width="16" height="16"><use href="#pe"/></svg>
<div class="t c1">Seller tests</div><div class="t c2">Critical</div><div class="t c3">3min 30s</div><svg class="m"><use href="#m"/></svg></div>
<div class="r" style="top:220px"><svg class="cb"><use href="#cb"/></svg><div class="o">11</div><div class="tc"><svg width="14" height="16" style="margin-right:5px"><use href="#doc"/></svg><svg class="st"><use href="#x"/></svg>List and view confirmed orders<span class="pill">PP</span><svg class="lk"><use href="#lk"/></svg></div><div class="t c1">Seller tests</div><div class="t c2">Normal</div><div class="t c3">6min 13s</div><svg class="m"><use href="#m"/></svg></div>
<div class="r" style="top:242px"><svg class="cb"><use href="#cb"/></svg><div class="o">12</div><div class="tc"><svg width="14" height="16" style="margin-right:5px"><use href="#doc"/></svg><svg class="st"><use href="#ok"/></svg>Set order status<svg class="lk"><use href="#lk"/></svg></div><div class="t c1">Seller tests</div><div class="t c2">Normal</div><div class="t c3">23min 9s</div><svg class="m"><use href="#m"/></svg></div>
<div class="r" style="top:264px"><svg class="cb"><use href="#cb"/></svg><div class="o">13</div><div class="tc"><svg width="14" height="16" style="margin-right:5px"><use href="#doc"/></svg><svg class="st"><use href="#pz"/></svg>Verify event log<span class="pill">PP</span><svg class="lk"><use href="#lk"/></svg></div><div class="t c1">Web store tests</div><div class="t c2">High</div><svg class="m"><use href="#m"/></svg></div>
<div class="r" style="top:286px"><svg class="cb"><use href="#cb"/></svg><div class="o">14</div><div class="tc"><svg width="14" height="16" style="margin-right:5px"><use href="#doc"/></svg><svg class="st"><use href="#ok"/></svg>Check SSL connectivity<svg class="lk"><use href="#lk"/></svg></div><div class="t c1">Security tests</div><div class="t c2">High</div><div class="t c3">23min 2s</div><svg class="m"><use href="#m"/></svg></div>
<div class="r" style="top:308px"><svg class="cb"><use href="#cb"/></svg><div class="o">15</div><div class="tc"><svg width="14" height="16" style="margin-right:5px"><use href="#doc"/></svg><svg class="st"><use href="#ok"/></svg>Check SSL certificate<svg class="lk"><use href="#lk"/></svg></div><div class="t c1">Security tests</div><div class="t c2">High</div><div class="t c3">20min 40s</div><svg class="m"><use href="#m"/></svg></div>
<div class="r" style="top:330px"><svg class="cb"><use href="#cb"/></svg><div class="o">16</div><div class="tc"><svg width="14" height="16" style="margin-right:5px"><use href="#doc"/></svg><svg class="st"><use href="#ok"/></svg>Check created cookies<svg class="lk"><use href="#lk"/></svg></div><div class="t c1">Security tests</div><div class="t c2">High</div><div class="t c3">22min 11s</div><svg class="m"><use href="#m"/></svg></div>
<div class="r" style="top:352px"><svg class="cb"><use href="#cb"/></svg><div class="o">17</div><div class="tc"><svg width="14" height="16" style="margin-right:5px"><use href="#doc"/></svg><svg class="st"><use href="#ok"/></svg>Validate browser rendering<svg class="lk"><use href="#lk"/></svg></div><div class="t c1">Usability tests</div><div class="t c2">Normal</div><div class="t c3">25min 16s</div><svg class="m"><use href="#m"/></svg></div>
</div>
<!-- bottom toolbar -->
<div class="a" style="left:509px;top:987px;width:1406px;height:33px;background:linear-gradient(#bfcce0,#cddcf0);border-top:1px solid #a9aeb6;border-bottom:2px solid #9fa8b5"></div>
<div class="bt" style="left:513px"></div>
<div class="bt" style="left:647px"></div>
<svg class="i" style="left:533px;top:995px" width="17" height="17"><path d="M3 .5h11v13H1c2 0 2-1 2-3z" fill="#dbe8f7" stroke="#4f86c2"/><path d="M1 13.500h9c1 1 1 2 0 2H1c-1 0-1-2 0-2z" fill="#c6dcf2" stroke="#4f86c2"/><circle cx="13" cy="13" r="3.500" fill="#5caa48" stroke="#fff"/></svg>
<div class="t" style="left:555px;top:997px">Add test run...</div>
<svg class="i" style="left:658px;top:995px" width="17" height="17"><use href="#pe"/></svg>
<div class="t" style="left:680px;top:997px;letter-spacing:-.12px">Set parameters ...</div>
<svg class="i" style="left:788px;top:996px" width="15" height="15"><rect x=".5" y=".5" width="13" height="13" fill="#eef5fc" stroke="#6f9fd4"/><rect x="1" y="1" width="12" height="3" fill="#8fbbe6"/><path d="M3 6.500h8M3 9h8M3 11.500h8" stroke="#9ab"/><path d="M8 12l2 2 4-4" fill="none" stroke="#5caa48" stroke-width="1.300"/></svg>
<div class="t" style="left:809px;top:997px">Select filtered</div>
<div class="t" style="right:8px;top:997px;font-style:italic;color:#7d848d;letter-spacing:.07px">Estimated execution time 5h 8min 53s (1 tests excluded)</div>
</body></html>
